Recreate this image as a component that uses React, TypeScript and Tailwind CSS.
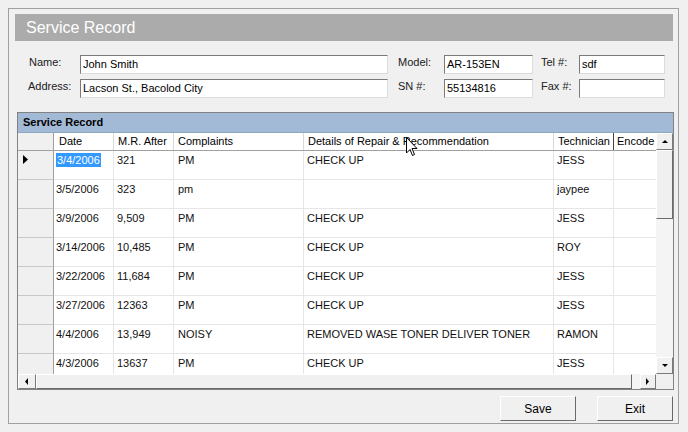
import React from 'react';

type Row = {
  date: string;
  mr: string;
  complaint: string;
  details: string;
  tech: string;
};

const rows: Row[] = [
  { date: '3/4/2006', mr: '321', complaint: 'PM', details: 'CHECK UP', tech: 'JESS' },
  { date: '3/5/2006', mr: '323', complaint: 'pm', details: '', tech: 'jaypee' },
  { date: '3/9/2006', mr: '9,509', complaint: 'PM', details: 'CHECK UP', tech: 'JESS' },
  { date: '3/14/2006', mr: '10,485', complaint: 'PM', details: 'CHECK UP', tech: 'ROY' },
  { date: '3/22/2006', mr: '11,684', complaint: 'PM', details: 'CHECK UP', tech: 'JESS' },
  { date: '3/27/2006', mr: '12363', complaint: 'PM', details: 'CHECK UP', tech: 'JESS' },
  { date: '4/4/2006', mr: '13,949', complaint: 'NOISY', details: 'REMOVED WASE TONER DELIVER TONER', tech: 'RAMON' },
  { date: '4/3/2006', mr: '13637', complaint: 'PM', details: 'CHECK UP', tech: 'JESS' },
];

const Field = ({ value, width }: { value: string; width: string }) => (
  <div
    className={`${width} h-[19px] bg-white border border-t-[#7a7a7a] border-l-[#7a7a7a] border-r-[#dcdcdc] border-b-[#dcdcdc] px-[2px] pt-[2px] text-[11px] leading-[13px] whitespace-nowrap overflow-hidden`}
  >
    {value}
  </div>
);

const Label = ({ text, width }: { text: string; width: string }) => (
  <div className={`${width} text-[11px] leading-[13px] pt-[1px] text-[#202020]`}>{text}</div>
);

const ScrollButton = ({ dir, className }: { dir: 'up' | 'down' | 'left' | 'right'; className: string }) => {
  const pts = {
    up: '2,6 5,3 8,6',
    down: '2,3 5,6 8,3',
    left: '6,1 3,4.5 6,8',
    right: '3,1 6,4.5 3,8',
  }[dir];
  return (
    <div
      className={`${className} flex items-center justify-center bg-[#f0f0f0] border border-t-white border-l-white border-r-[#7a7a7a] border-b-[#7a7a7a]`}
    >
      <svg width="10" height="9" viewBox="0 0 10 9">
        <polygon points={pts} fill="#000" />
      </svg>
    </div>
  );
};

export default function App() {
  return (
    <div
      className="w-[688px] h-[432px] bg-[#f0f0f0] p-2 relative"
      style={{ fontFamily: '"Liberation Sans", Arial, sans-serif' }}
    >
      <div className="w-[671px] h-[416px] border border-[#a0a0a0] pl-[6px] pr-[5px] pt-[5px] flex flex-col">
        {/* title bar */}
        <div className="h-[27px] bg-[#ababab] text-white text-[16px] leading-[27px] pl-[11px]">Service Record</div>

        {/* form */}
        <div className="mt-[14px] flex flex-col gap-[5px] pl-[14px]">
          <div className="flex items-start">
            <Label text="Name:" width="w-[51px]" />
            <Field value="John Smith" width="w-[308px]" />
            <div className="w-[10px]" />
            <Label text="Model:" width="w-[46px]" />
            <Field value="AR-153EN" width="w-[89px]" />
            <div className="w-[8px]" />
            <Label text="Tel #:" width="w-[38px]" />
            <Field value="sdf" width="w-[86px]" />
          </div>
          <div className="flex items-start">
            <Label text="Address:" width="w-[51px] -ml-[1px] mr-[1px]" />
            <Field value="Lacson St., Bacolod City" width="w-[308px]" />
            <div className="w-[10px]" />
            <Label text="SN #:" width="w-[46px]" />
            <Field value="55134816" width="w-[89px]" />
            <div className="w-[8px]" />
            <Label text="Fax #:" width="w-[38px]" />
            <Field value="" width="w-[86px]" />
          </div>
        </div>

        {/* grid */}
        <div className="mt-[14px] ml-[2px] w-[657px] h-[278px] border border-[#828282] flex flex-col bg-[#f0f0f0]">
          <div className="h-[20px] bg-[#a3bad6] border-b border-[#8fa7c4] text-[11px] font-bold leading-[19px] pl-[5px] text-black">
            Service Record
          </div>
          <div className="flex h-[241px]">
            <div className="w-[638px] flex flex-col overflow-hidden">
              {/* column header */}
              <div className="flex h-[18px] bg-white border-b border-[#a0a0a0] text-[11px] leading-[17px] text-black">
                <div className="w-[36px] shrink-0 bg-[#f0f0f0] border-r border-[#a0a0a0]" />
                <div className="w-[60px] shrink-0 pl-[5px] border-r border-[#d8d8d8]">Date</div>
                <div className="w-[60px] shrink-0 pl-[4px] border-r border-[#d8d8d8] whitespace-nowrap">M.R. After</div>
                <div className="w-[130px] shrink-0 pl-[4px] border-r border-[#d8d8d8]">Complaints</div>
                <div className="w-[250px] shrink-0 pl-[4px] border-r border-[#d8d8d8] whitespace-nowrap">Details of Repair &amp; Recommendation</div>
                <div className="w-[60px] shrink-0 pl-[4px] border-r border-[#404040] whitespace-nowrap overflow-hidden">Technician</div>
                <div className="w-[42px] shrink-0 pl-[3px] whitespace-nowrap">Encode</div>
              </div>
              {/* rows */}
              <div className="flex-1 overflow-hidden">
                {rows.map((r, i) => (
                  <div key={i} className="flex h-[29px] text-[11px] leading-[13px] text-[#111]">
                    <div className="w-[36px] shrink-0 bg-[#f0f0f0] border-r border-b border-[#c8c8c8] border-r-[#a0a0a0] pl-[5px] pt-[4px]">
                      {i === 0 && (
                        <svg width="6" height="9" viewBox="0 0 6 9">
                          <polygon points="0,0 5,4.5 0,9" fill="#000" />
                        </svg>
                      )}
                    </div>
                    <div className="w-[60px] shrink-0 bg-white border-r border-b border-[#e6e6e6] pl-[2px] pt-[3px] whitespace-nowrap">
                      {i === 0 ? <span className="bg-[#3399ff] text-white px-[1px] py-[1px]">{r.date}</span> : r.date}
                    </div>
                    <div className="w-[60px] shrink-0 bg-white border-r border-b border-[#e6e6e6] pl-[3px] pt-[3px]">{r.mr}</div>
                    <div className="w-[130px] shrink-0 bg-white border-r border-b border-[#e6e6e6] pl-[4px] pt-[3px]">{r.complaint}</div>
                    <div className="w-[250px] shrink-0 bg-white border-r border-b border-[#e6e6e6] pl-[3px] pt-[3px] whitespace-nowrap">{r.details}</div>
                    <div className="w-[60px] shrink-0 bg-white border-r border-b border-[#e6e6e6] pl-[3px] pt-[3px]">{r.tech}</div>
                    <div className="w-[42px] shrink-0 bg-white border-b border-[#e6e6e6]" />
                  </div>
                ))}
              </div>
            </div>
            {/* vertical scrollbar */}
            <div className="w-[17px] flex flex-col bg-[#f4f4f4]">
              <ScrollButton dir="up" className="h-[17px]" />
              <div className="h-[69px] bg-[#f0f0f0] border border-t-white border-l-white border-r-[#6a6a6a] border-b-[#6a6a6a]" />
              <div className="flex-1" />
              <ScrollButton dir="down" className="h-[17px]" />
            </div>
          </div>
          {/* horizontal scrollbar */}
          <div className="flex h-[15px] bg-[#f4f4f4]">
            <ScrollButton dir="left" className="w-[18px]" />
            <div className="w-[596px] bg-[#f0f0f0] border border-t-white border-l-white border-r-[#6a6a6a] border-b-[#6a6a6a]" />
            <div className="flex-1" />
            <ScrollButton dir="right" className="w-[16px]" />
            <div className="w-[17px] bg-[#f0f0f0]" />
          </div>
        </div>

        {/* buttons */}
        <div className="mt-[6px] flex justify-end gap-[21px]">
          <button className="w-[76px] h-[25px] bg-[#f0f0f0] border border-t-white border-l-white border-r-[#696969] border-b-[#696969] text-[12px] text-black">
            Save
          </button>
          <button className="w-[76px] h-[25px] bg-[#f0f0f0] border border-t-white border-l-white border-r-[#696969] border-b-[#696969] text-[12px] text-black">
            Exit
          </button>
        </div>
      </div>

      {/* mouse pointer */}
      <svg className="absolute left-[406px] top-[137px]" width="13" height="20" viewBox="0 0 13 20">
        <path d="M0.5 0.5 L0.5 16 L4 12.5 L6.5 18.5 L8.5 17.5 L6 11.5 L11 11.5 Z" fill="#fff" stroke="#000" strokeWidth="1" />
      </svg>
    </div>
  );
}
